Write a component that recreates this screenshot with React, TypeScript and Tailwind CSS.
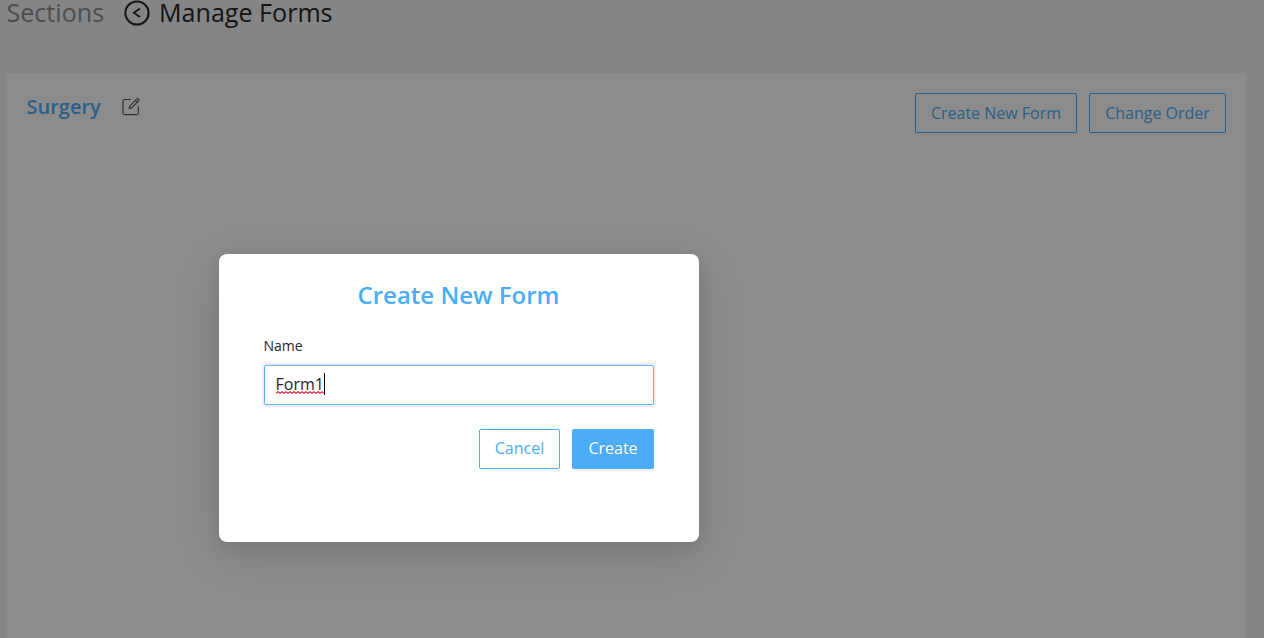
import React from "react";

function BackIcon() {
  return (
    <svg className="-mt-[0.5px] block h-[26px] w-[26px]" viewBox="0 0 26 26" fill="none" stroke="currentColor">
      <circle cx="13" cy="13" r="11.6" strokeWidth="2" />
      <path d="M16 8.500 9.800 12.800l6.200 4.300" strokeWidth="1.800" />
    </svg>
  );
}

function EditIcon() {
  return (
    <svg className="block h-[18px] w-[18px] text-[#5c5c5c]" viewBox="0 0 18 18" fill="none" stroke="currentColor" strokeWidth="1.200" strokeLinejoin="round">
      <path d="M8.900 1.500H2.900C1.700 1.500 1 2.200 1 3.300v11.600c0 1.100.7 1.800 1.900 1.800h11.600c1.200 0 1.900-.7 1.900-1.800V8.200" />
      <path d="M7.200 10.500l.8-2.700 6.600-6.600c.6-.6 1.400-.6 1.900-.1s.5 1.300 0 1.900L9.900 9.600 7.200 10.500ZM13.500 2.300l1.900 1.900" />
    </svg>
  );
}

function Squiggle() {
  return (
    <svg className="absolute left-0 top-[19px] block h-[3px] w-[48px]" viewBox="0 0 48 3" fill="none" stroke="#ee2b4f" strokeWidth="1.200">
      <path d="M0 2.300l2-1.600 2 1.600 2-1.600 2 1.600 2-1.600 2 1.600 2-1.600 2 1.600 2-1.600 2 1.600 2-1.600 2 1.600 2-1.600 2 1.600 2-1.600 2 1.600 2-1.600 2 1.600 2-1.600 2 1.600 2-1.600 2 1.600 2-1.600 2 1.600" />
    </svg>
  );
}

function OutlineButton({ className, children }: { className: string; children: React.ReactNode }) {
  return (
    <button className={`h-10 rounded-[2px] border border-[#4badf8] bg-white text-base text-[#4badf8] shadow-[0_2px_0_rgba(0,0,0,0.03)] ${className}`}>
      {children}
    </button>
  );
}

export default function App() {
  return (
    <div className="relative h-[638px] w-full overflow-hidden bg-[#f0f2f5] font-['Open_Sans',sans-serif] text-[#262626]">
      <header className="flex h-[73px] items-start pl-[6.5px] text-[25.1px] leading-[24px]">
        <span className="w-[117px] whitespace-nowrap text-[#8c8c8c]">Sections</span>
        <BackIcon />
        <span className="ml-[9.500px] whitespace-nowrap">Manage Forms</span>
      </header>
      <main className="ml-[7px] mr-[18px] flex h-[565px] justify-between bg-white pl-[19.5px] pr-5 pt-5">
        <div className="flex h-7 items-center">
          <h2 className="w-[95.5px] text-xl font-semibold leading-7 text-[#4badf8]">Surgery</h2>
          <EditIcon />
        </div>
        <div className="flex gap-3">
          <OutlineButton className="w-[162px] pb-px">Create New Form</OutlineButton>
          <OutlineButton className="w-[137px] pb-px">Change Order</OutlineButton>
        </div>
      </main>
      <div className="absolute inset-0 bg-black/45 pl-[219px] pt-[254px]">
        <section className="h-[288px] w-[480px] rounded-lg bg-white px-[45px] pt-[23px] shadow-[0_6px_16px_rgba(0,0,0,0.06),0_12px_48px_rgba(0,0,0,0.12)]">
          <h1 className="-ml-px text-center text-2xl font-semibold leading-9 text-[#4badf8]">Create New Form</h1>
          <label className="-ml-[0.5px] mt-[22px] block text-sm leading-[22px]">Name</label>
          <div className="mt-2 flex h-10 items-center rounded-[2px] border border-[#5bb8fa] pl-[10.5px] pr-[11px] shadow-[0_0_0_2px_rgba(215,80,200,0.13)]">
            <span className="relative -mt-[2px] text-base leading-6">
              Form1
              <Squiggle />
            </span>
            <span className="-mt-[2px] h-[22px] w-px bg-black" />
          </div>
          <div className="mt-6 flex justify-end gap-3">
            <OutlineButton className="w-[81px] pb-[3px]">Cancel</OutlineButton>
            <button className="h-10 w-[82px] rounded-[2px] bg-[#4badf8] pb-[3px] text-base text-white shadow-[0_2px_0_rgba(0,0,0,0.045)] [text-shadow:0_-1px_0_rgba(0,0,0,0.12)]">Create</button>
          </div>
        </section>
      </div>
    </div>
  );
}
